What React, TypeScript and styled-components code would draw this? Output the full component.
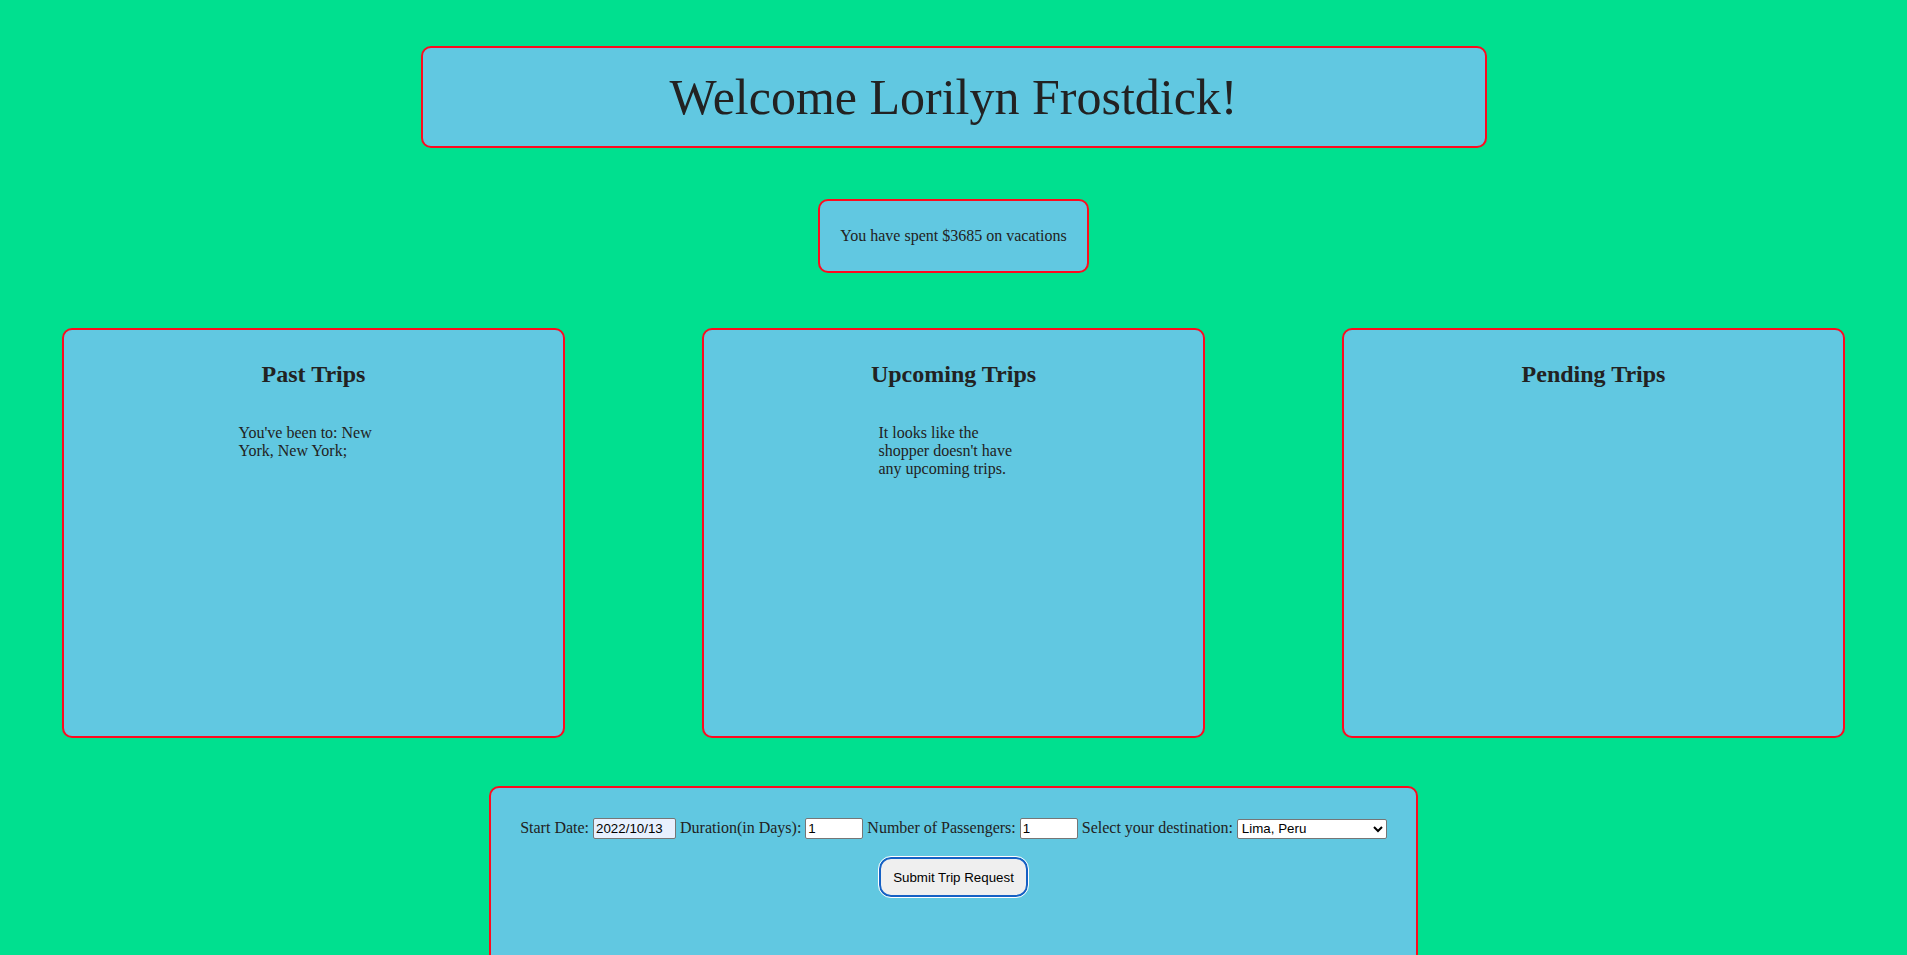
import React from "react";
import styled, { createGlobalStyle } from "styled-components";

const GlobalStyle = createGlobalStyle`
  * { box-sizing: border-box; }
  html, body { margin: 0; padding: 0; }
  body {
    background: #00e08f;
    font-family: "Liberation Serif", "Times New Roman", serif;
    color: #222222;
  }
`;

const Page = styled.main`
  display: flex;
  flex-direction: column;
  align-items: center;
  min-height: 100vh;
  padding-top: 46px;
`;

const Panel = styled.section`
  background: #61c8e1;
  border: 2px solid #ff0a1e;
  border-radius: 10px;
`;

const Header = styled(Panel)`
  width: 1066px;
  padding: 20px;
  text-align: center;
`;

const Title = styled.h1`
  margin: 0;
  font-size: 50px;
  font-weight: normal;
  line-height: normal;
`;

const Spent = styled(Panel)`
  margin-top: 51px;
  padding: 26px 20px;
  font-size: 16px;
`;

const CardRow = styled.div`
  width: 100%;
  margin-top: 55px;
  padding: 0 62px;
  display: flex;
  justify-content: space-between;
`;

const Card = styled(Panel)`
  width: 503px;
  height: 410px;
  padding: 10px;
  text-align: center;
`;

const CardTitle = styled.h2`
  margin: 21px 0 0;
  font-size: 24px;
  font-weight: bold;
  line-height: normal;
`;

const CardText = styled.p`
  width: 150px;
  margin: 36px auto 0;
  text-align: left;
  font-size: 16px;
  line-height: 18px;
`;

const FormBox = styled(Panel)`
  width: 929px;
  height: 410px;
  margin-top: 48px;
  padding: 30px 10px;
  display: flex;
  flex-direction: column;
  align-items: center;
  gap: 18px;
`;

const FormRow = styled.div`
  width: 100%;
  text-align: center;
  white-space: nowrap;
  font-size: 16px;
`;

const TextField = styled.input<{ $w: number; $filled?: boolean }>`
  width: ${(p) => p.$w}px;
  height: 21px;
  padding: 1px 2px;
  border: 1px solid #767676;
  border-radius: 2px;
  background: ${(p) => (p.$filled ? "#e8f0fe" : "#ffffff")};
  font-family: "Liberation Sans", Arial, sans-serif;
  font-size: 13.33px;
  color: #000;
  vertical-align: baseline;
`;

const Select = styled.select`
  width: 150px;
  height: 20px;
  border: 1px solid #767676;
  border-radius: 2px;
  background: #ffffff;
  font-family: "Liberation Sans", Arial, sans-serif;
  font-size: 13.33px;
  color: #000;
`;

const SubmitButton = styled.button`
  width: 149px;
  height: 40px;
  background: #efefef;
  border: 2px solid #1560c4;
  border-radius: 12px;
  outline: 1px solid #ffffff;
  font-family: "Liberation Sans", Arial, sans-serif;
  font-size: 13.33px;
  color: #000;
  cursor: pointer;
`;

const trips = [
  { title: "Past Trips", text: "You've been to: New York, New York;" },
  { title: "Upcoming Trips", text: "It looks like the shopper doesn't have any upcoming trips." },
  { title: "Pending Trips", text: "" },
];

export default function App() {
  return (
    <>
      <GlobalStyle />
      <Page>
        <Header>
          <Title>Welcome Lorilyn Frostdick!</Title>
        </Header>
        <Spent>You have spent $3685 on vacations</Spent>
        <CardRow>
          {trips.map((t) => (
            <Card key={t.title}>
              <CardTitle>{t.title}</CardTitle>
              {t.text && <CardText>{t.text}</CardText>}
            </Card>
          ))}
        </CardRow>
        <FormBox>
          <FormRow>
            Start Date: <TextField $w={83} $filled defaultValue="2022/10/13" />{" "}
            Duration(in Days): <TextField $w={58} type="number" defaultValue="1" />{" "}
            Number of Passengers: <TextField $w={58} type="number" defaultValue="1" />{" "}
            Select your destination:{" "}
            <Select defaultValue="Lima, Peru">
              <option>Lima, Peru</option>
              <option>New York, New York</option>
            </Select>
          </FormRow>
          <SubmitButton type="button">Submit Trip Request</SubmitButton>
        </FormBox>
      </Page>
    </>
  );
}
